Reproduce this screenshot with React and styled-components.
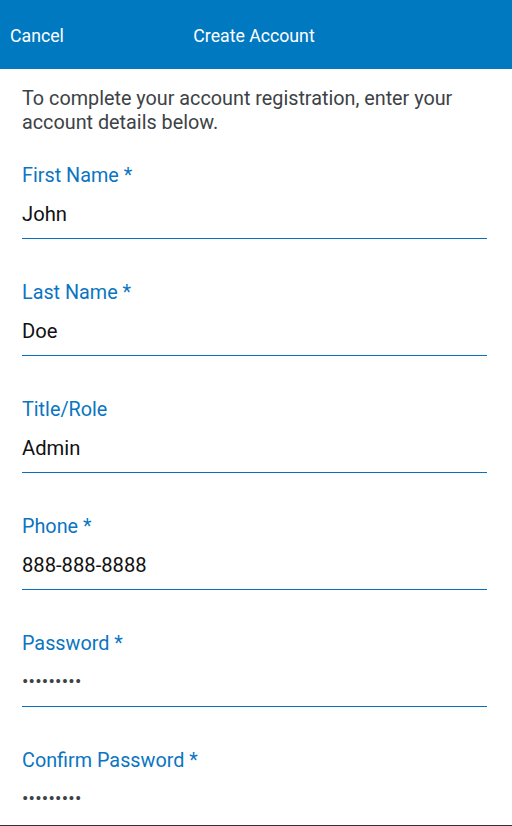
import styled, { createGlobalStyle } from "styled-components";

const GlobalStyle = createGlobalStyle`
    html, body {
        margin: 0;
        padding: 0;
        background: #ffffff;
        font-family: Roboto, "Liberation Sans", sans-serif;
    }
`;

const fields = [
    { label: "First Name *", value: "John" },
    { label: "Last Name *", value: "Doe" },
    { label: "Title/Role", value: "Admin" },
    { label: "Phone *", value: "888-888-8888" },
    { label: "Password *", value: "•••••••••", secret: true },
    { label: "Confirm Password *", value: "•••••••••", secret: true },
];

const App = () => {
    return (
        <>
            <GlobalStyle />
            <Screen>
                <Header>
                    <HeaderButton>Cancel</HeaderButton>
                    <HeaderTitle>Create Account</HeaderTitle>
                    <HeaderSpacer />
                </Header>
                <Body>
                    <Intro>
                        To complete your account registration, enter your account details below.
                    </Intro>
                    {fields.map((f) => (
                        <Field key={f.label}>
                            <Label>{f.label}</Label>
                            <Value $secret={f.secret}>{f.value}</Value>
                        </Field>
                    ))}
                </Body>
            </Screen>
        </>
    );
};

export default App;

const Screen = styled.div`
    width: 512px;
    height: 826px;
    overflow: hidden;
    box-sizing: border-box;
    border-bottom: 1px solid #333333;
    display: flex;
    flex-direction: column;
`

const Header = styled.div`
    height: 69px;
    flex-shrink: 0;
    background: #0079c1;
    display: flex;
    align-items: center;
    justify-content: space-between;
    padding: 0 10px;
    box-sizing: border-box;
    color: #ffffff;
    font-size: 17.7px;
`

const HeaderButton = styled.div`
    width: 120px;
    margin-top: 2px;
`

const HeaderTitle = styled.div`
    margin-top: 2px;
    margin-left: -4px;
`

const HeaderSpacer = styled.div`
    width: 120px;
`

const Body = styled.div`
    padding: 18px 20px 0 22px;
    display: flex;
    flex-direction: column;
`

const Intro = styled.p`
    margin: 0 0 29px;
    font-size: 19.8px;
    line-height: 24px;
    color: #3c4246;
    padding-right: 4px;
`

const Field = styled.div`
    display: flex;
    flex-direction: column;
    gap: 14px;
    padding-bottom: 12px;
    border-bottom: 1.5px solid #0a6fbd;
    margin: 0 5px 42.1px 0;

    &:last-child {
        border-bottom-color: transparent;
    }
`

const Label = styled.div`
    font-size: 19.8px;
    line-height: 24px;
    color: #0a75c2;
`

const Value = styled.div`
    font-size: ${(p) => (p.$secret ? "19px" : "20.2px")};
    letter-spacing: ${(p) => (p.$secret ? "0.2px" : "0")};
    line-height: 24px;
    color: ${(p) => (p.$secret ? "#3c4246" : "#111111")};
`
